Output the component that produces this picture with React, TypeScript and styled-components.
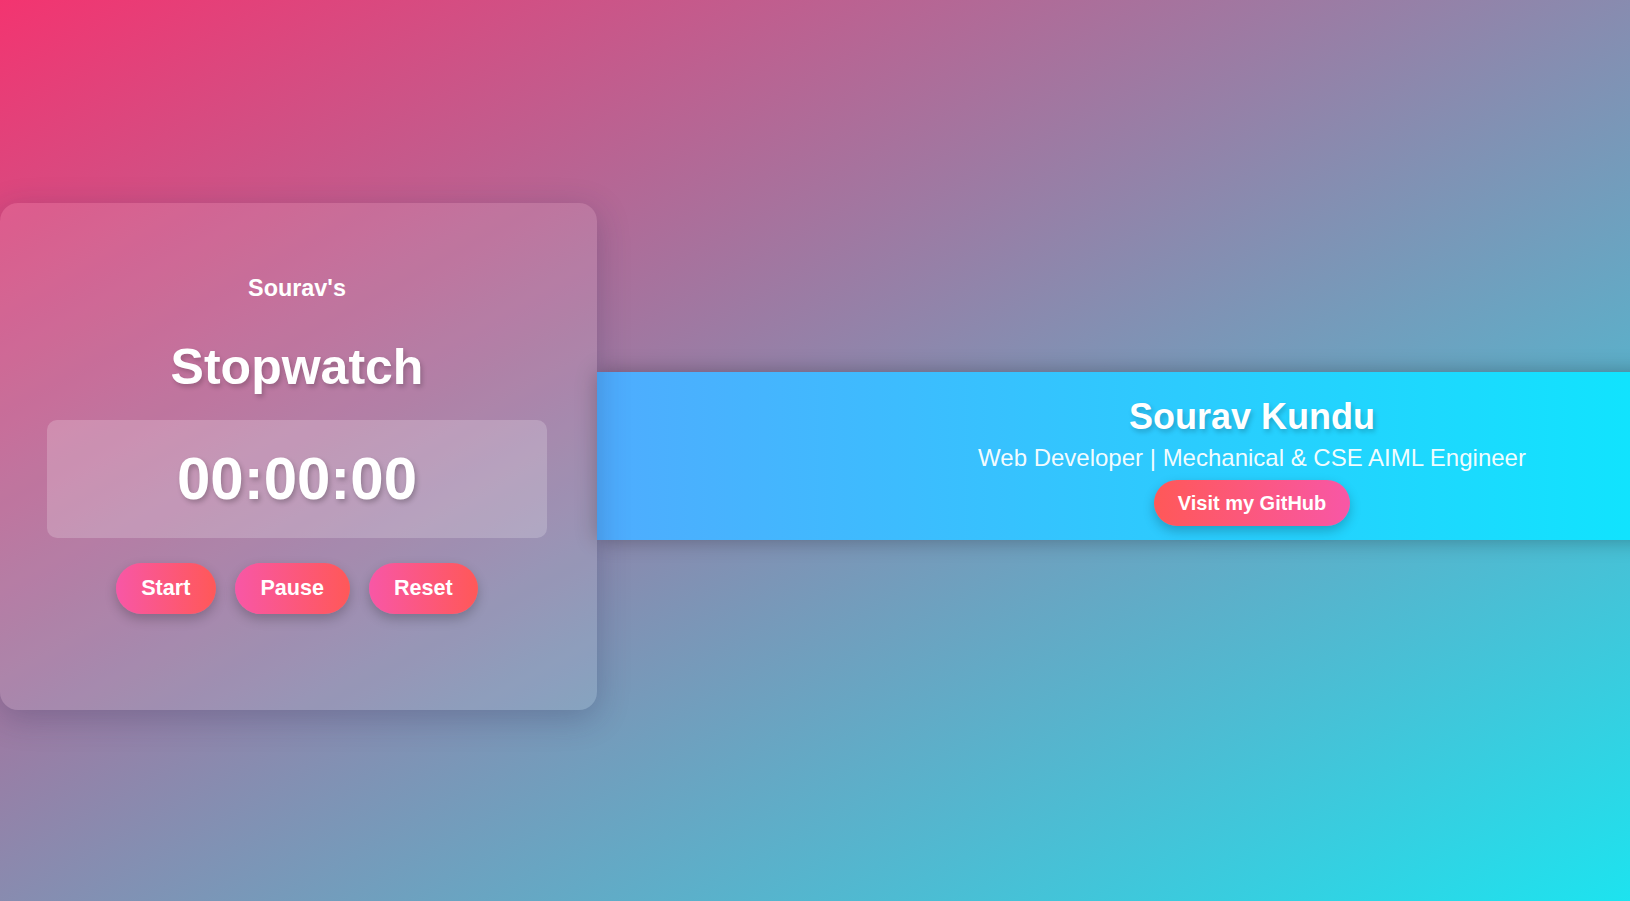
import React from "react";
import styled, { createGlobalStyle } from "styled-components";

const Global = createGlobalStyle`
  html, body { margin: 0; padding: 0; }
  body {
    font-family: "Liberation Sans", Arial, sans-serif;
    background: linear-gradient(to bottom right, #f33470 0%, #1de3ef 100%);
    min-height: 100vh;
    overflow: hidden;
  }
`;

const Page = styled.div`
  min-height: 100vh;
  box-sizing: border-box;
  padding-top: 11px;
  display: flex;
  align-items: center;
  overflow: hidden;
`;

const Card = styled.section`
  position: relative;
  z-index: 2;
  flex: 0 0 597px;
  box-sizing: border-box;
  height: 507px;
  padding: 72px 50px 0 47px;
  border-radius: 18px;
  background: rgba(255, 255, 255, 0.11);
  box-shadow: 0 8px 32px rgba(31, 38, 80, 0.25);
  display: flex;
  flex-direction: column;
  align-items: center;
  color: #fff;
`;

const Owner = styled.h3`
  margin: 0;
  font-size: 23.4px;
  line-height: 27px;
  font-weight: 700;
`;

const Title = styled.h1`
  margin: 36px 0 0;
  font-size: 50px;
  line-height: 58px;
  font-weight: 700;
  text-shadow: 2px 3px 5px rgba(0, 0, 0, 0.2);
`;

const Display = styled.div`
  margin-top: 24px;
  width: 100%;
  height: 118px;
  border-radius: 10px;
  background: rgba(255, 255, 255, 0.2);
  display: flex;
  align-items: center;
  justify-content: center;
  font-size: 60px;
  font-weight: 700;
  text-shadow: 2px 3px 5px rgba(0, 0, 0, 0.22);
`;

const Controls = styled.div`
  margin-top: 25px;
  display: flex;
  gap: 19px;
  justify-content: center;
`;

const PillButton = styled.button<{ $reverse?: boolean }>`
  border: none;
  cursor: pointer;
  color: #fff;
  font-family: "Liberation Sans", Arial, sans-serif;
  font-weight: 700;
  border-radius: 30px;
  background: linear-gradient(
    90deg,
    ${(p) => (p.$reverse ? "#ff5858" : "#f857a6")},
    ${(p) => (p.$reverse ? "#f857a6" : "#ff5858")}
  );
  box-shadow: 0 5px 12px rgba(0, 0, 0, 0.22);
`;

const ControlButton = styled(PillButton)`
  height: 51px;
  padding: 0 25.5px;
  font-size: 21.6px;
`;

const Banner = styled.header`
  position: relative;
  z-index: 1;
  flex: 0 0 1310px;
  height: 168px;
  box-sizing: border-box;
  padding-top: 24px;
  background: linear-gradient(90deg, #4facfe 0%, #00f2fe 100%);
  box-shadow: 0 0 20px rgba(0, 0, 0, 0.3);
  display: flex;
  flex-direction: column;
  align-items: center;
  color: #fff;
`;

const Name = styled.h2`
  margin: 0;
  font-size: 36px;
  line-height: 42px;
  font-weight: 700;
  text-shadow: 2px 3px 5px rgba(0, 0, 0, 0.2);
`;

const Role = styled.p`
  margin: 6px 0 0;
  font-size: 24px;
  line-height: 28px;
  color: rgba(255, 255, 255, 0.95);
`;

const GithubButton = styled(PillButton)`
  margin-top: 8px;
  height: 46px;
  padding: 0 24px;
  font-size: 20px;
`;

export default function App() {
  return (
    <>
      <Global />
      <Page>
        <Card>
          <Owner>Sourav's</Owner>
          <Title>Stopwatch</Title>
          <Display>00:00:00</Display>
          <Controls>
            <ControlButton>Start</ControlButton>
            <ControlButton>Pause</ControlButton>
            <ControlButton>Reset</ControlButton>
          </Controls>
        </Card>
        <Banner>
          <Name>Sourav Kundu</Name>
          <Role>Web Developer | Mechanical &amp; CSE AIML Engineer</Role>
          <GithubButton $reverse>Visit my GitHub</GithubButton>
        </Banner>
      </Page>
    </>
  );
}
